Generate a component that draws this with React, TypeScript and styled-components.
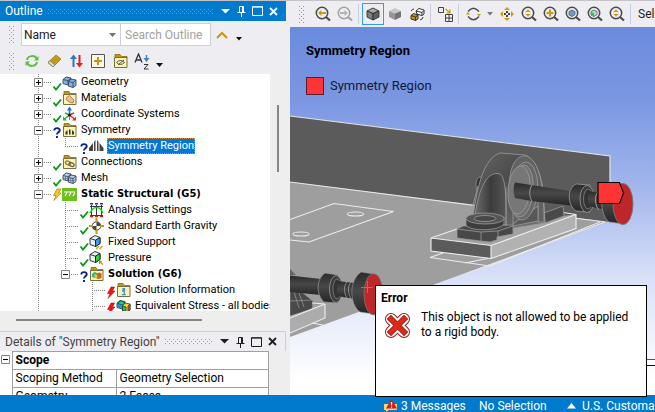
import React from "react";
import styled, { createGlobalStyle, css } from "styled-components";

const ui = `Roboto, "Open Sans", sans-serif`;
const treeFont = `Roboto, "Open Sans", sans-serif`;
const treeBold = `"DejaVu Sans Condensed", "DejaVu Sans", sans-serif`;

const Global = createGlobalStyle`
  * { box-sizing: border-box; }
  body { margin: 0; overflow: hidden; background: #eeeef2; font: 12px/16px ${ui}; color: #1b1b1b; }
  button, input, select { font: inherit; color: inherit; }
  svg { display: block; flex: none; }
`;

const dots = (color: string) =>
  `url("data:image/svg+xml,%3Csvg xmlns='http://www.w3.org/2000/svg' width='4' height='4'%3E%3Cpath d='M0 0h1v1h-1zM2 2h1v1h-1z' fill='%23${color}'/%3E%3C/svg%3E")`;

const Page = styled.div`
  display: flex;
  flex-direction: column;
  height: 100vh;
  border-top: 1px solid #c4c4c8;
`;
const Workspace = styled.div`
  display: flex;
  flex: 1;
  gap: 4px;
  min-height: 0;
`;
const Sidebar = styled.aside`
  display: flex;
  flex-direction: column;
  flex: none;
  width: 286px;
  min-height: 0;
`;
const PaneHeader = styled.header<{ $active?: boolean }>`
  display: flex;
  align-items: center;
  flex: none;
  height: 20px;
  padding: 0 5px;
  color: ${p => (p.$active ? "#fff" : "#444")};
  background: ${p => (p.$active ? "#007acc" : "#eeeef2")};
  ${p => !p.$active && css`border: 1px solid #ccceDb; border-width: 1px 1px 0 0;`}
`;
const PaneTitle = styled.h2`
  margin: 0;
  font-size: 12px;
  font-weight: 400;
  white-space: nowrap;
`;
const HeaderDots = styled.span<{ $active?: boolean }>`
  flex: 1;
  height: 5px;
  margin: 0 3px 0 5px;
  background: ${p => dots(p.$active ? "59a8de" : "a0a0a4")};
`;
const HeaderButton = styled.button<{ $active?: boolean }>`
  display: grid;
  place-items: center;
  width: 16px;
  height: 16px;
  padding: 0;
  border: 0;
  background: none;
  color: ${p => (p.$active ? "#fff" : "#1e1e1e")};
`;
const ToolRow = styled.div<{ $tall?: boolean }>`
  display: flex;
  align-items: center;
  flex: none;
  height: ${p => (p.$tall ? 27 : 26)}px;
  padding-left: 9px;
`;
const Grip = styled.span`
  flex: none;
  width: 5px;
  height: 17px;
  margin-right: 7px;
  background: ${dots("999999")};
`;
const NameSelect = styled.select`
  width: 100px;
  height: 23px;
  padding: 0 2px;
  appearance: none;
  border: 1px solid #ccceDb;
  border-radius: 0;
  background: #fff url("data:image/svg+xml,%3Csvg xmlns='http://www.w3.org/2000/svg' width='7' height='4'%3E%3Cpath d='M0 0h7L3.500 4z' fill='%23717171'/%3E%3C/svg%3E") no-repeat right 4px center;
`;
const Search = styled.input`
  width: 91px;
  height: 23px;
  margin-left: -1px;
  padding: 0 4px;
  border: 1px solid #ccceDb;
  background: #fff;
  &::placeholder { color: #a2a2a2; opacity: 1; }
`;
const ToolButton = styled.button<{ $active?: boolean; $narrow?: boolean }>`
  display: grid;
  place-items: center;
  flex: none;
  width: ${p => (p.$narrow ? 12 : 22)}px;
  height: 22px;
  padding: 0;
  border: 1px solid ${p => (p.$active ? "#3399ff" : "transparent")};
  background: none;
`;
const TreeArea = styled.div`
  flex: 1;
  display: grid;
  grid-template-columns: 1fr 16px;
  grid-template-rows: 1fr 20px;
  min-height: 0;
  background: #eee;
`;
const TreeList = styled.ul`
  margin: 0;
  padding: 0 0 0 25px;
  min-height: 0;
  overflow: hidden;
  list-style: none;
  background: #fff;
  color: #000;
  font: 11px/16px ${treeFont};
`;
const TreeRow = styled.li`
  display: flex;
  height: 16px;
  white-space: nowrap;
`;
type GuideKind = "none" | "line" | "tee" | "end";
const dotV = "repeating-linear-gradient(to bottom, #808080 0 1px, transparent 1px 2px)";
const dotH = "repeating-linear-gradient(to right, #808080 0 1px, transparent 1px 2px)";
const Guide = styled.span<{ $kind: GuideKind }>`
  display: grid;
  align-items: center;
  flex: none;
  width: 27px;
  height: 16px;
  padding-left: 9px;
  background-repeat: no-repeat;
  ${p => p.$kind === "line" && css`background-image: ${dotV}; background-size: 1px 16px; background-position: 13px 0;`}
  ${p => p.$kind === "tee" && css`background-image: ${dotV}, ${dotH}; background-size: 1px 16px, 14px 1px; background-position: 13px 0, 13px 8px;`}
  ${p => p.$kind === "end" && css`background-image: ${dotV}, ${dotH}; background-size: 1px 9px, 14px 1px; background-position: 13px 0, 13px 8px;`}
`;
const Expander = styled.button`
  width: 9px;
  height: 9px;
  padding: 0;
  border: 0;
  background: #fff;
`;
const TreeLabel = styled.span<{ $bold?: boolean; $selected?: boolean }>`
  margin-left: 3px;
  padding: 0 1px;
  ${p => p.$bold && css`font-family: ${treeBold}; font-weight: 700;`}
  ${p => p.$selected && css`background: #0078d7; color: #fff; outline: 1px dotted #d88a3a; outline-offset: -1px;`}
`;
const Track = styled.div<{ $side: "v" | "h" }>`
  ${p => p.$side === "v"
    ? css`grid-row: 1 / 3; grid-column: 2; padding: 31px 0 0 7px;`
    : css`padding: 8px 0 0 16px;`}
`;
const Thumb = styled.div<{ $side: "v" | "h" }>`
  background: #858585;
  ${p => (p.$side === "v" ? css`width: 2px; height: 67px;` : css`width: 186px; height: 2px;`)}
`;
const DetailsBody = styled.div`
  height: 44px;
  padding-right: 17px;
  overflow: hidden;
  background: linear-gradient(to left, #eee 17px, #fff 17px);
`;
const DetailsTable = styled.table`
  width: 100%;
  border-collapse: collapse;
  table-layout: fixed;
  color: #000;
  th, td { height: 18px; padding: 0 3px; font-weight: 400; text-align: left; line-height: 17px; border: 1px solid #a0a0a0; overflow: hidden; white-space: nowrap; }
  th:first-child, td:first-child { border: 0; padding: 0 0 0 1px; }
  .group { font-weight: 700; }
`;
const Main = styled.main`
  display: flex;
  flex-direction: column;
  flex: 1;
  min-width: 0;
`;
const ViewToolbar = styled(ToolRow)`
  overflow: hidden;
  white-space: nowrap;
  ${Grip} { margin-right: 8px; }
`;
const Separator = styled.span`
  flex: none;
  width: 1px;
  height: 20px;
  margin: 0 3px 0 2px;
  background: #ccceDb;
`;
const ToolText = styled.span`
  margin-left: 4px;
`;
const Viewport = styled.section`
  position: relative;
  flex: 1;
  min-height: 0;
  background: linear-gradient(#6a8bdd 0, #7b97e2 20%, #a6b9ed 45%, #d9e1f8 68%, #ffffff 96%);
`;
const Scene = styled.svg`
  position: absolute;
  inset: 0;
  width: 100%;
  height: 100%;
`;
const Legend = styled.div`
  position: relative;
  padding: 14px 0 0 16px;
  color: #000;
`;
const LegendTitle = styled.h1`
  margin: 0 0 15px;
  font-size: 13px;
  line-height: 20px;
  font-weight: 700;
`;
const LegendRow = styled.div`
  display: flex;
  align-items: center;
  gap: 6px;
  font-size: 13px;
  line-height: 20px;
  color: #111833;
`;
const Swatch = styled.span`
  width: 18px;
  height: 18px;
  border: 1px solid #5b1d2d;
  background: #ff3535;
`;
const ErrorTip = styled.div`
  position: absolute;
  z-index: 2;
  left: 85px;
  bottom: -2px;
  width: 272px;
  height: 112px;
  padding: 4px 5px;
  border: 1px solid #000;
  background: #fff;
  color: #000;
`;
const ErrorTitle = styled.strong`
  display: block;
  line-height: 16px;
`;
const ErrorBody = styled.div`
  display: flex;
  gap: 10px;
  margin-top: 4px;
  padding-left: 3px;
  line-height: 15px;
  p { margin: 0; white-space: nowrap; }
  svg { margin-top: 2px; }
`;
const StatusBar = styled.footer`
  display: flex;
  align-items: center;
  flex: none;
  height: 17px;
  padding-left: 383px;
  overflow: hidden;
  white-space: nowrap;
  background: #007acc;
  color: #fff;
`;
const StatusItem = styled.button<{ $width: number }>`
  display: flex;
  align-items: center;
  flex: none;
  gap: 3px;
  min-width: ${p => p.$width}px;
  padding: 4px 0 0;
  border: 0;
  background: none;
`;

const HeaderControls = ({ active }: { active?: boolean }) => (
  <>
    <HeaderButton $active={active} aria-label="Menu">
      <svg width="9" height="5"><path d="M0 0h9L4.500 4.500z" fill="currentColor" /></svg>
    </HeaderButton>
    <HeaderButton $active={active} aria-label="Pin">
      <svg width="9" height="12" fill="none" stroke="currentColor"><path d="M2.500 7V1.500h4V7M5.500 1v6M.500 7.500h8M4.500 8v4" /></svg>
    </HeaderButton>
    <HeaderButton $active={active} aria-label="Maximize">
      <svg width="11" height="10" fill="none" stroke="currentColor"><path d="M.5 1h10v8.500H.5zM0 .8h11" /></svg>
    </HeaderButton>
    <HeaderButton $active={active} aria-label="Close">
      <svg width="9" height="9" fill="none" stroke="currentColor" strokeWidth="1.800"><path d="M1 1l7 7M8 1L1 8" /></svg>
    </HeaderButton>
  </>
);

const Status = ({ kind }: { kind: string }) => (
  <svg width="10" height="19" viewBox="0 0 10 19">
    {kind === "ok" && <path d="M1.500 12.500L4 15.500L9 9.500" fill="none" stroke="#0b9a1c" strokeWidth="1.900" />}
    {kind === "ask" && <path d="M2.300 8.500C2.500 5.200 8.200 5.500 7.700 8.500C7.400 10.300 5 10.200 5 12.500M5 14v2" fill="none" stroke="#10208c" strokeWidth="1.900" />}
    {kind === "bolt" && <path d="M5 3h4L6.500 7H9L2 14.500L4 9.500H1.500z" fill="#f7c81e" stroke="#a98006" strokeWidth=".7" />}
    {kind === "fail" && <path d="M5 5h3.500L6.500 9H9L2 16.500L4 11.500H1.500z" fill="#f01414" stroke="#c01010" strokeWidth=".6" />}
  </svg>
);

const FolderShape = () => (
  <>
    <path d="M2 5V1.500h5l1.500 2H14V5z" fill="#c6950c" stroke="#8a6810" strokeWidth=".8" />
    <path d="M1.500 4.500h12.500v10H1.500z" fill="#fbf3b0" stroke="#77713f" />
  </>
);

const NodeIcon = ({ kind }: { kind: string }) => (
  <svg width="15" height="16" viewBox="0 0 15 16">
    {(kind === "geom" || kind === "mesh") && (
      <g fill={kind === "geom" ? "#7fb2e5" : "#b9d2ec"} stroke="#37485e" strokeWidth=".9">
        <path d="M1 5.500L4 3l5 1v5l-3 2-5-1.500z" /><path d="M1 5.500l5 1.200L9 4M6 6.700V11" fill="none" />
        <path d="M6.500 7.500L9 5l5 1v5.500l-3 2-4.500-1.300z" /><path d="M6.500 7.500l4.500 1L14 6M11 8.500v5" fill="none" />
        {kind === "mesh" && <path d="M3.500 6v4.500M1 8l5 1M8.700 8v5M6.500 10l4.500 1 3-2" fill="none" strokeWidth=".5" />}
      </g>
    )}
    {["mat", "sym", "conn", "sol", "info"].includes(kind) && <FolderShape />}
    {kind === "mat" && <path d="M4.500 7.500l3-2L12 10l-1 3-3-.5-4-3z" fill="#eabf94" stroke="#a86f43" strokeWidth=".8" />}
    {kind === "sym" && <path d="M3.500 12.500V10l2-2v4.500zM7 12.500v-5h1.500v5zM10 12.500V8l2 2v2.500z" fill="#333" />}
    {kind === "conn" && <g fill="none" stroke="#9e7d36" strokeWidth="1.300"><ellipse cx="6" cy="9" rx="2.700" ry="1.800" transform="rotate(20 6 9)" /><ellipse cx="9.500" cy="10.500" rx="2.700" ry="1.800" transform="rotate(20 9.500 10.500)" stroke="#666" /></g>}
    {kind === "sol" && <g><path d="M3 8l2.500-2L8 7v4l-2 1-3-1z" fill="#25b0a0" /><path d="M7 8l3-1.500 2.500 1v4.500L9.500 13 7 12z" fill="#e7521f" /><path d="M7 8l2.500 1v4L7 12z" fill="#35b74a" /><path d="M5.500 8L8 9v3l-2.500-1z" fill="#f2cf2e" /></g>}
    {kind === "info" && <path d="M7 6.500h1.500v1.300H7zM6 9.200h2.300v3.300M5.800 12.600h4" fill="none" stroke="#3c8fe0" strokeWidth="1.200" />}
    {kind === "stress" && <g stroke="#244" strokeWidth=".8"><path d="M1 5l3-2.500 5 1V9l-3 2-5-1.500z" fill="#2299dc" /><path d="M4 3l5 1-2.500 3L2 5.500z" fill="#37cf67" /><path d="M6.500 8L9 5l5 1v6l-3 2-4.500-1.300z" fill="#f1d332" /><path d="M6.500 8l3.500 1v4.500l-3.500-1z" fill="#30b94d" /><path d="M12 8l2-2v6l-2 1.500z" fill="#ea4c28" /></g>}
    {kind === "coord" && <g strokeWidth="1.600" fill="none"><path d="M7.500 9V2" stroke="#2268e8" /><path d="M5 4.500l2.500-4 2.500 4z" fill="#2268e8" /><path d="M7.500 9l-5 4M7.500 9L3 7" stroke="#36a845" /><path d="M1 10.500V14.500h4z" fill="#36a845" /><path d="M7.500 9l5 4M7.500 9L12 7" stroke="#e42d2d" /><path d="M14 10.500V14.500h-4z" fill="#e42d2d" /><path d="M7.500 9v5" stroke="#888" strokeWidth="1" /><circle cx="7.500" cy="9" r="1.600" fill="#222" /></g>}
    {kind === "region" && <path d="M0 13V10l4-5v8zM5 13V4l1.500-2v11zM14.500 13V10l-4-5v8zM9.500 13V4L8 2v11z" fill="#444" />}
    {kind === "static" && <g><path d="M0 2h15v13H0z" fill="#6cc01c" /><path d="M2 6h11M4.500 6v2M8.500 6v2M12.500 6v2M3 10l1.500-2.500M7 10l1.500-2.500M11 10l1.500-2.500" stroke="#fff" strokeWidth="1.100" /></g>}
    {kind === "settings" && <g fill="none"><path d="M2.500 3v11M7.500 3v11M12.500 3v11M1 4.500h13M1 13.500h13" stroke="#222" strokeWidth=".9" /><path d="M1 11C4 3.500 11 3.500 14 11" stroke="#16d51d" strokeWidth="1.500" /><path d="M1 1.700h13" stroke="#2121ed" strokeWidth="1.600" strokeDasharray="3 2" /><path d="M1 14.500h13" stroke="#ee1515" strokeWidth="1.600" strokeDasharray="3 2" /></g>}
    {kind === "gravity" && <g><circle cx="7.500" cy="8" r="4.200" fill="#fff" stroke="#333" /><path d="M7.500 8V4a4 4 0 0 1 4 4zM7.500 8v4a4 4 0 0 1-4-4z" fill="#444" /><path d="M7.500 0v4M7.500 12v4M0 8h4M11 8h4" stroke="#c99614" strokeWidth="2" /></g>}
    {(kind === "fixed" || kind === "pressure") && <g stroke="#222" strokeWidth=".9"><path d="M1 4.500l5-3 5 2v6L6.500 12.500 1 10.500z" fill="#e8eef2" /><path d="M1 4.500l5.500 1.700L11 3.500M6.500 6.200v6.300" fill="none" /><path d="M6.500 6.200L11 3.500v6l-4.500 3z" fill={kind === "fixed" ? "#3a9bf0" : "#21d935"} />{kind === "fixed" ? <path d="M7 15l3-3M10.500 15l3-3" stroke="#d29d1b" strokeWidth="1.400" /> : <path d="M14 14.500l-3.500-3M10.500 14v-2.700h2.500" fill="none" stroke="#c99614" strokeWidth="1.300" />}</g>}
  </svg>
);

type Node = { g: GuideKind[]; box?: "+" | "-"; s: string; icon: string; label: string; bold?: boolean; sel?: boolean };
const nodes: Node[] = [
  { g: ["tee"], box: "+", s: "ok", icon: "geom", label: "Geometry" },
  { g: ["tee"], box: "+", s: "ok", icon: "mat", label: "Materials" },
  { g: ["tee"], box: "+", s: "ok", icon: "coord", label: "Coordinate Systems" },
  { g: ["tee"], box: "-", s: "ask", icon: "sym", label: "Symmetry" },
  { g: ["line", "end"], s: "ask", icon: "region", label: "Symmetry Region", sel: true },
  { g: ["tee"], box: "+", s: "ok", icon: "conn", label: "Connections" },
  { g: ["tee"], box: "+", s: "ok", icon: "mesh", label: "Mesh" },
  { g: ["tee"], box: "-", s: "bolt", icon: "static", label: "Static Structural (G5)", bold: true },
  { g: ["line", "tee"], s: "ok", icon: "settings", label: "Analysis Settings" },
  { g: ["line", "tee"], s: "ok", icon: "gravity", label: "Standard Earth Gravity" },
  { g: ["line", "tee"], s: "ok", icon: "fixed", label: "Fixed Support" },
  { g: ["line", "tee"], s: "ok", icon: "pressure", label: "Pressure" },
  { g: ["line", "end"], box: "-", s: "ask", icon: "sol", label: "Solution (G6)", bold: true },
  { g: ["line", "none", "tee"], s: "fail", icon: "info", label: "Solution Information" },
  { g: ["line", "none", "tee"], s: "fail", icon: "stress", label: "Equivalent Stress - all bodies" },
];

const BoxMark = ({ plus }: { plus: boolean }) => (
  <svg width="9" height="9"><path d="M.5.5h8v8h-8z" fill="#fff" stroke="#848484" /><path d={plus ? "M2 4.500h5M4.500 2v5" : "M2 4.500h5"} stroke="#000" /></svg>
);

const Lens = ({ gray, children }: { gray?: boolean; children?: React.ReactNode }) => (
  <svg width="16" height="16" viewBox="0 0 16 16" fill="none">
    <circle cx="7" cy="7" r="5.700" stroke={gray ? "#a2a2a2" : "#4b4b4b"} strokeWidth="1.500" />
    <path d="M11 11l4 3.500" stroke={gray ? "#a2a2a2" : "#4b4b4b"} strokeWidth="2.200" />
    {children}
  </svg>
);
const Cube = ({ edges }: { edges?: boolean }) => (
  <svg width="14" height="14" viewBox="0 0 14 14" stroke={edges ? "#303030" : "none"} strokeWidth=".9" strokeLinejoin="round">
    <path d="M1 4l6-3 6 3-6 2.500z" fill={edges ? "#aaa" : "#c8c8c8"} /><path d="M1 4l6 2.500V13l-6-3z" fill={edges ? "#808080" : "#969696"} /><path d="M13 4L7 6.500V13l6-3z" fill={edges ? "#606060" : "#747474"} />
  </svg>
);
const UpDown = () => <path d="M4.500 6L7 3.300 9.500 6zM4.500 8L7 10.700 9.500 8z" fill="#c99a14" />;
const Caret = ({ color = "#111" }: { color?: string }) => <svg width="6" height="4"><path d="M0 0h6L3 3.500z" fill={color} /></svg>;

const edge = "#9a9a9a";

const Model = () => (
  <Scene viewBox="290 27 365 368" preserveAspectRatio="xMinYMin slice" aria-label="Bearing assembly model">
    <defs>
      <linearGradient id="shaft" x1="0" y1="0" x2="0" y2="1"><stop offset="0" stopColor="#2b2b2b" /><stop offset=".45" stopColor="#484848" /><stop offset="1" stopColor="#252525" /></linearGradient>
      <linearGradient id="arch" x1="0" y1="0" x2="1" y2="1"><stop offset="0" stopColor="#666" /><stop offset=".4" stopColor="#4c4c4c" /><stop offset="1" stopColor="#777" /></linearGradient>
      <linearGradient id="hollow" x1="0" y1="0" x2="1" y2="0"><stop offset="0" stopColor="#6c6c6c" /><stop offset=".5" stopColor="#3c3c3c" /><stop offset="1" stopColor="#555" /></linearGradient>
    </defs>
    <path d="M290 116L610 156V222L290 182z" fill="#5b5b5b" />
    <path d="M290 182L605 222L290 337z" fill="#9e9e9e" />
    <path d="M290 116L610 156V184M290 182L605 222L465 274" fill="none" stroke="#e5e5e5" strokeWidth="1.200" />
    <g fill="none" stroke="#ececec" strokeWidth="1.100">
      <path d="M290 219.500L334 203.500L393.500 211.500L309 242L290 240" />
      <ellipse cx="355.500" cy="214" rx="8" ry="2" /><ellipse cx="301" cy="234" rx="8" ry="2" />
      <path d="M443 253L430 257.500L490 266L600 222M465 263L490 258" />
    </g>
    <path d="M431 238L465 226L576 214.500L491 245.500z" fill="#a2a2a2" />
    <path d="M431 238L491 245.500V258.500L431 251z" fill="#5b5b5b" />
    <path d="M491 245.500L576 214.500V228.500L491 258.500z" fill="#b2b2b2" />
    <path d="M457 229L431 238L491 245.500L576 214.500V228.500L491 258.500L431 251V238M491 245.500V258.500M576 214.500L560 212" fill="none" stroke="#efefef" strokeWidth="1.100" />
    <ellipse cx="480" cy="185" rx="4" ry="8" fill="#333" stroke={edge} strokeWidth=".7" />
    <g stroke={edge} strokeWidth=".8">
      <path d="M544 213L563 206L564 216L545 223z" fill="#4a4a4a" />
      <path d="M473 218C477 186 484 158 500 153L525 155C538 160 544 184 544 204L545 223L514 228L496 228z" fill="url(#arch)" />
      <path d="M475 217C478 188 488 170 500 174C507 178 506 208 506 225L492 224z" fill="url(#hollow)" />
      <path d="M513 226V197C505 178 513 154 526 156C539 160 544 183 544 222L538 222V202" fill="#626262" />
      <path d="M513 226L538 221V206L513 224z" fill="#585858" />
      <ellipse cx="524" cy="191" rx="13.500" ry="29" fill="#686868" transform="rotate(5 524 191)" />
      <ellipse cx="522" cy="191" rx="11" ry="26" fill="#737373" transform="rotate(5 522 191)" />
      <ellipse cx="519" cy="190" rx="11" ry="24" fill="#777" transform="rotate(5 519 190)" />
      <path d="M457 229L463 226L513 225V234L497 237V240L490 242L480 241L457 238z" fill="#484848" />
      <path d="M457 229L481 232L498 231L513 226M481 232V241M498 231V239" fill="none" />
      <path d="M466 219V225C470 232 500 231 504 224V217z" fill="#3d3d3d" />
      <ellipse cx="485" cy="218.500" rx="19" ry="5.500" fill="#555" /><ellipse cx="485" cy="218.500" rx="11" ry="3" fill="#484848" />
      <path d="M506 187V226M478 186L471 213" fill="none" />
    </g>
    <path d="M515 182.500L576 192V206L531 201L515 198C513 193 513 187 515 182.500z" fill="url(#shaft)" />
    <path d="M532 185C529 189 529 197 532 201" fill="none" stroke={edge} />
    <path d="M576 184L590 185V212L576 211C567 205 567 188 576 184z" fill="url(#shaft)" stroke={edge} strokeWidth=".8" />
    <ellipse cx="587" cy="199" rx="7" ry="13.500" fill="#3a3a3a" stroke={edge} strokeWidth=".8" />
    <ellipse cx="588" cy="199" rx="4.500" ry="10" fill="#333" stroke={edge} strokeWidth=".6" />
    <path d="M588 191L602 193V209L588 206z" fill="url(#shaft)" />
    <path d="M598 192C594 196 595 206 599 210" fill="none" stroke={edge} />
    <path d="M607 184L624 184V224L609 222C599 214 600 190 607 184z" fill="url(#shaft)" stroke={edge} strokeWidth=".7" />
    <ellipse cx="623" cy="204" rx="10" ry="20.500" fill="#bf2629" stroke="#777" strokeWidth=".9" />
    <path d="M598 182.500H619.500L623.500 193L619.500 203.500H598z" fill="#ff3434" stroke="#080808" strokeWidth="1.200" />
    <path d="M290 269L296 275L290 275z" fill="#666" />
    <path d="M290 290L303 293L313 301L312 310L290 316z" fill="#494949" stroke={edge} strokeWidth=".7" />
    <path d="M290 301L313 300M294 292L299 308M299 293L304 307" fill="none" stroke={edge} strokeWidth=".7" />
    <path d="M290 316L325 304V318L290 333z" fill="#acacac" />
    <path d="M312 303L325 304L290 318M325 304V318L290 333M312 323L323 325" fill="none" stroke="#efefef" strokeWidth="1.100" />
    <path d="M290 275.500L321 279V295L290 292z" fill="url(#shaft)" />
    <path d="M325 273L338 275V303L324 302C316 295 316 279 325 273z" fill="url(#shaft)" stroke={edge} strokeWidth=".7" />
    <ellipse cx="336" cy="289" rx="6.500" ry="13.500" fill="#3c3c3c" stroke={edge} strokeWidth=".8" />
    <ellipse cx="337" cy="289" rx="4" ry="10" fill="#333" stroke={edge} strokeWidth=".6" />
    <path d="M337 281L355 283V299L337 296z" fill="url(#shaft)" />
    <path d="M347 282C343 286 344 295 348 299M351 282C347 286 348 296 352 300" fill="none" stroke={edge} strokeWidth=".8" />
    <path d="M361 272L374 274V314L360 312C349 304 349 280 361 272z" fill="url(#shaft)" stroke={edge} strokeWidth=".6" />
    <ellipse cx="373.500" cy="294.300" rx="9.500" ry="20.500" fill="#bf2629" stroke="#777" strokeWidth=".8" />
    <path d="M361 287.500H373M367.500 281V293" stroke="#7377d6" />
    <path d="M645 359.500H660" stroke="#555" /><path d="M645 360H660V365H645z" fill="#fff" /><path d="M645 365.500H660" stroke="#111" />
  </Scene>
);

export default function App() {
  return (
    <Page>
      <Global />
      <Workspace>
        <Sidebar>
          <PaneHeader $active>
            <PaneTitle>Outline</PaneTitle>
            <HeaderDots $active />
            <HeaderControls active />
          </PaneHeader>
          <ToolRow $tall>
            <Grip />
            <NameSelect aria-label="Filter by"><option>Name</option></NameSelect>
            <Search aria-label="Search Outline" placeholder="Search Outline" />
            <ToolButton aria-label="Collapse"><svg width="12" height="8" fill="none"><path d="M1 7l5-5 5 5" stroke="#c8960c" strokeWidth="2" /></svg></ToolButton>
            <ToolButton $narrow aria-label="More filters"><svg width="6" height="12"><path d="M0 8h6L3 11.500z" fill="#111" /></svg></ToolButton>
          </ToolRow>
          <ToolRow>
            <Grip />
            <ToolButton aria-label="Refresh"><svg width="14" height="14" fill="none"><path d="M2 6C3 1 10 1 12 5M12 8C11 13 4 13 2 9" stroke="#64bb46" strokeWidth="2" /><path d="M13.500 2v4.500H9zM.5 12V7.500H5z" fill="#64bb46" /></svg></ToolButton>
            <ToolButton aria-label="Clear"><svg width="15" height="14"><path d="M1 8.500L9 1l5 4-8 8z" fill="#c8990f" stroke="#7a5f16" strokeWidth=".6" /><path d="M1 8.500l2-1.800L8 11l-2 2z" fill="#e9dcb4" stroke="#777" strokeWidth=".8" /></svg></ToolButton>
            <ToolButton aria-label="Sort order"><svg width="13" height="14" fill="none"><path d="M3.500 13V3" stroke="#2f74c8" strokeWidth="2" /><path d="M0 5L3.500.5 7 5z" fill="#2f74c8" /><path d="M9.500 1v9" stroke="#f01818" strokeWidth="2" /><path d="M6 9l3.500 4.500L13 9z" fill="#f01818" /></svg></ToolButton>
            <ToolButton aria-label="Expand all"><svg width="14" height="14" fill="none"><path d="M.5.5h13v13H.5z" fill="#fdf8e8" stroke="#555" /><path d="M3 7h8M7 3v8" stroke="#c99614" strokeWidth="2" /></svg></ToolButton>
            <ToolButton aria-label="Hidden folder"><svg width="15" height="16"><FolderShape /><path d="M3.500 9.500q4-4 8 0q-4 4-8 0M5 12l6-5" fill="none" stroke="#555" /></svg></ToolButton>
            <ToolButton aria-label="Sort alphabetically"><svg width="16" height="17" fill="none"><path d="M1 9.500L4.500 1 8 9.500M2.200 7h4.600" stroke="#333" strokeWidth="1.300" /><path d="M12.500 2v5" stroke="#3b83ca" strokeWidth="1.500" /><path d="M9.500 5l3 4 3-4z" fill="#3b83ca" /><path d="M10 11.500h4L10 16h4.500" stroke="#333" /></svg></ToolButton>
            <ToolButton $narrow aria-label="More tools"><svg width="7" height="14"><path d="M0 9h7L3.500 13z" fill="#111" /></svg></ToolButton>
          </ToolRow>
          <TreeArea>
            <TreeList>
              {nodes.map(n => (
                <TreeRow key={n.label}>
                  {n.g.map((kind, i) => (
                    <Guide key={i} $kind={kind}>
                      {n.box && i === n.g.length - 1 && (
                        <Expander aria-label={`Toggle ${n.label}`}><BoxMark plus={n.box === "+"} /></Expander>
                      )}
                    </Guide>
                  ))}
                  <Status kind={n.s} />
                  <NodeIcon kind={n.icon} />
                  <TreeLabel $bold={n.bold} $selected={n.sel}>{n.label}</TreeLabel>
                </TreeRow>
              ))}
            </TreeList>
            <Track $side="v"><Thumb $side="v" /></Track>
            <Track $side="h"><Thumb $side="h" /></Track>
          </TreeArea>
          <PaneHeader>
            <PaneTitle>Details of "Symmetry Region"</PaneTitle>
            <HeaderDots />
            <HeaderControls />
          </PaneHeader>
          <DetailsBody>
            <DetailsTable>
              <colgroup><col width="12" /><col width="104" /><col /></colgroup>
              <tbody>
                <tr><td><Expander aria-label="Toggle Scope"><BoxMark plus={false} /></Expander></td><td className="group" colSpan={2}>Scope</td></tr>
                <tr><td /><td>Scoping Method</td><td>Geometry Selection</td></tr>
                <tr><td /><td>Geometry</td><td>2 Faces</td></tr>
              </tbody>
            </DetailsTable>
          </DetailsBody>
        </Sidebar>
        <Main>
          <ViewToolbar>
            <Grip />
            <ToolButton aria-label="Previous view"><Lens><path d="M3 7l3.500-3v2H11v2H6.500v2z" fill="#c99a14" /></Lens></ToolButton>
            <ToolButton aria-label="Next view"><Lens gray><path d="M11 7L7.500 4v2H3v2h4.500v2z" fill="#b4b4b4" /></Lens></ToolButton>
            <Separator />
            <ToolButton $active aria-label="Shaded with edges"><Cube edges /></ToolButton>
            <ToolButton aria-label="Shaded"><Cube /></ToolButton>
            <ToolButton aria-label="Swap display">
              <svg width="15" height="15" fill="none" stroke="#333"><path d="M6 4l3-2.500 5 1.500v4l-2 1.500-5-1.500zM6 4l6 1.500 2-2M12 5.500v3" fill="#fff" /><path d="M1 8.500L3.500 6.500 8 8v4l-2.500 1.500L1 12z" fill="#c8960c" /><path d="M1 8.500l4.500 1.500L8 8M5.500 10v3.500M1 4q1-2 3-2M10 13q3-1 3-3" /></svg>
            </ToolButton>
            <Separator />
            <ToolButton aria-label="Fit to grid">
              <svg width="15" height="15" fill="none" stroke="#444"><path d="M.5.5h5v5h-5zM7.500 7.500h7v7h-7zM11 7.500v7M7.500 11h7" /><path d="M7.500 2l4 3.500M12 2.500v3.500H8.500" stroke="#c99a14" strokeWidth="1.200" /></svg>
            </ToolButton>
            <Separator />
            <ToolButton aria-label="Rotate">
              <svg width="15" height="14" fill="none"><path d="M2 4.500Q7.500-2 13 4.500M13 9.500Q7.500 16 2 9.500" stroke="#4a4a4a" strokeWidth="1.400" /><path d="M0 7.500h4L2 5zM11 7h4l-2 2.500z" fill="#c99a14" /></svg>
            </ToolButton>
            <ToolButton $narrow aria-label="Rotate options"><Caret color="#777" /></ToolButton>
            <ToolButton aria-label="Pan">
              <svg width="14" height="14"><path d="M7 0l3 3H4zM7 14l3-3H4zM0 7l3-3v6zM14 7l-3-3v6z" fill="#c99a14" /><path d="M6 4h2v2H6zM6 8h2v2H6zM4 6h2v2H4zM8 6h2v2H8z" fill="#444" /></svg>
            </ToolButton>
            <ToolButton aria-label="Zoom"><Lens><UpDown /></Lens></ToolButton>
            <ToolButton aria-label="Zoom in"><Lens><path d="M3.500 7h7M7 3.500v7" stroke="#c99a14" strokeWidth="2.200" /></Lens></ToolButton>
            <ToolButton aria-label="Zoom to fit"><Lens><path d="M4 5.500L7 4l3 1.500v3L7 10.500 4 9z" fill="#6b9bd0" stroke="#556" strokeWidth=".8" /></Lens></ToolButton>
            <ToolButton aria-label="Zoom to selection"><Lens><path d="M4 5.500L7 4l3 1.500v3L7 10.500 4 9z" fill="#bcd3e4" stroke="#556" strokeWidth=".8" /><path d="M4 6l3 1v3.500L4 9z" fill="#20d33c" /></Lens></ToolButton>
            <ToolButton aria-label="Box zoom"><Lens><UpDown /></Lens></ToolButton>
            <Separator />
            <ToolText>Select</ToolText>
          </ViewToolbar>
          <Viewport>
            <Model />
            <Legend>
              <LegendTitle>Symmetry Region</LegendTitle>
              <LegendRow><Swatch />Symmetry Region</LegendRow>
            </Legend>
            <ErrorTip role="alert">
              <ErrorTitle>Error</ErrorTitle>
              <ErrorBody>
                <svg width="27" height="27" viewBox="0 0 27 27" fill="none" strokeLinecap="square">
                  <path d="M7 7l13 13M20 7L7 20" stroke="#99181a" strokeWidth="12" strokeLinecap="round" />
                  <path d="M7 7l13 13M20 7L7 20" stroke="#fff" strokeWidth="10" strokeLinecap="round" />
                  <path d="M7 7l13 13M20 7L7 20" stroke="#9d1414" strokeWidth="6" />
                  <path d="M7 7l13 13M20 7L7 20" stroke="#dc2a16" strokeWidth="4.500" />
                </svg>
                <p>This object is not allowed to be applied<br />to a rigid body.</p>
              </ErrorBody>
            </ErrorTip>
          </Viewport>
        </Main>
      </Workspace>
      <StatusBar>
        <StatusItem $width={96}>
          <svg width="15" height="13"><path d="M1 5h13v6H6l-3 2v-2H1z" fill="#f6d66b" /><path d="M8.500 0L14 9.500H3z" fill="#d91616" /><path d="M8.500 3v3.500M8.500 7.500v1.200" stroke="#fff" strokeWidth="1.300" /></svg>
          3 Messages
        </StatusItem>
        <StatusItem $width={88}>No Selection</StatusItem>
        <StatusItem $width={88}><svg width="12" height="6"><path d="M0 5.500L4.500 0 9 5.500z" fill="#fff" /></svg>U.S. Customary</StatusItem>
      </StatusBar>
    </Page>
  );
}
